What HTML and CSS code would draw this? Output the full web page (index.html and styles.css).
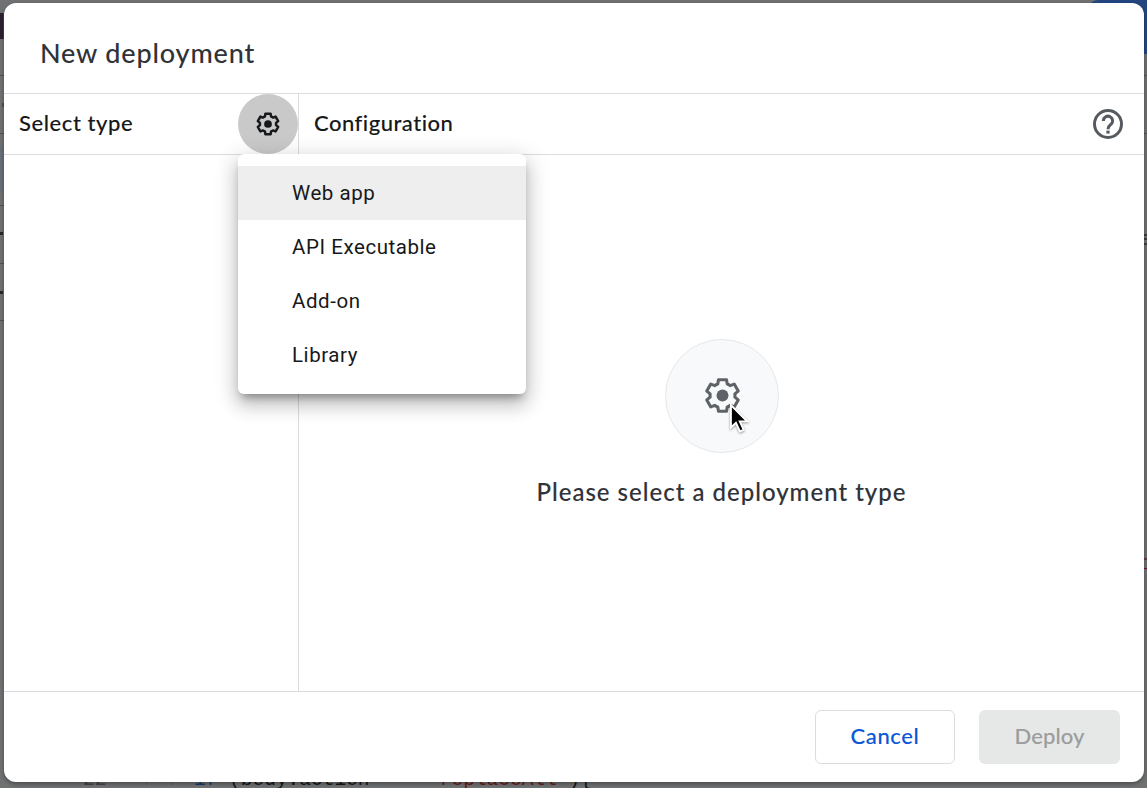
FILE: index.html
```html
<!DOCTYPE html>
<html lang="en">
<head>
<meta charset="utf-8">
<title>New deployment</title>
<link rel="stylesheet" href="styles.css">
</head>
<body>
<svg class="defs" aria-hidden="true">
  <symbol id="gear" viewBox="-18 -18 36 36">
    <path class="gear-rim" d="M-4.6-11.2-3.9-15.4H3.9L4.6-11.2Q6.2-10.7 7.4-9.6L11.4-11.1 15.3-4.3 12-1.6Q12.3 0 12 1.6L15.3 4.3 11.4 11.1 7.4 9.6Q6.2 10.7 4.6 11.2L3.9 15.4H-3.9L-4.6 11.2Q-6.2 10.7-7.4 9.6L-11.4 11.1-15.3 4.3-12 1.6Q-12.3 0-12-1.6L-15.3-4.3-11.4-11.1-7.4-9.6Q-6.2-10.7-4.6-11.2Z"/>
    <circle r="5.8" fill="currentColor"/>
  </symbol>
</svg>
<div class="editor" aria-hidden="true">
  <i class="mark purple"></i><i class="mark blue"></i><i class="mark tab"></i><i class="mark panel"></i><i class="mark l1"></i><i class="mark l2"></i><i class="mark l3"></i><i class="mark l4"></i><i class="mark l5"></i><i class="mark d1"></i><i class="mark d2"></i><i class="mark d3"></i><i class="mark r1"></i><i class="mark r2"></i><i class="mark r3"></i><i class="mark r4"></i><i class="mark r5"></i>
  <div class="code"><span class="num">22</span><span class="guide"></span><span class="kw">if</span> (body.action === <span class="str">'replaceAll'</span>){</div>
</div>
<main class="dialog">
  <header class="title"><h1>New deployment</h1></header>
  <section class="body">
    <aside class="types">
      <div class="bar"><h2 class="select">Select type</h2>
        <button class="gear-btn" aria-label="Types"><svg><use href="#gear"/></svg></button>
      </div>
      <ul class="menu">
        <li class="active">Web app</li><li>API Executable</li><li>Add-on</li><li>Library</li>
      </ul>
    </aside>
    <div class="config">
      <div class="bar"><h2 class="conf">Configuration</h2>
        <svg class="help" viewBox="0 0 30 30"><circle cx="15" cy="15" r="13.5"/><path d="M10.4 12A4.6 4.6 0 1 1 17.8 15.4C16 16.8 15 17.5 15 20.3"/><path class="dot" d="M13.4 21.6h3.2v3h-3.2z"/></svg>
      </div>
      <div class="empty">
        <div class="disc"><svg class="big"><use href="#gear"/></svg>
          <svg class="cursor" viewBox="0 0 22 32"><path d="M2 2V25.5L7.3 20.6 11.4 29.5 15.4 27.8 11.3 19H19Z"/></svg>
        </div>
        <p>Please select a deployment type</p>
      </div>
    </div>
  </section>
  <footer class="actions"><button class="cancel">Cancel</button><button class="deploy" disabled>Deploy</button></footer>
</main>
</body>
</html>
```
FILE: styles.css
```css
* { box-sizing: border-box; }
body { margin: 0; height: 788px; padding: 3px 3px 6px 4px; overflow: hidden; background: #707172; font-family: Lato, "Open Sans", sans-serif; font-variant-ligatures: none; }
h1, h2, p, ul { margin: 0; padding: 0; }
button { font: inherit; padding: 0; border: 0; }
.defs { position: absolute; width: 0; height: 0; }
.gear-rim { fill: none; stroke: currentColor; stroke-width: var(--rim, 3); stroke-linejoin: round; }

/* Dimmed editor behind the dialog */
.editor { position: absolute; inset: 0; overflow: hidden; }
.mark { position: absolute; left: 0; width: 4px; height: 1px; background: #505152; }
.purple { top: 13px; height: 26px; background: #2b2130; }
.blue { top: 13px; left: 3px; width: 1px; height: 26px; background: #294766; }
.tab { left: 1088px; top: 0; width: 59px; height: 54px; border-radius: 10px 0 0 0; background: #234680; }
.panel { top: 146px; height: 47px; background: #687077; }
.l1 { top: 75px; } .l2 { top: 133px; } .l3 { top: 205px; } .l4 { top: 263px; } .l5 { top: 320px; }
.d1 { top: 103px; left: 2px; height: 4px; }
.d2 { top: 232px; height: 3px; width: 3px; background: #252627; }
.d3 { top: 291px; height: 3px; width: 3px; background: #252627; }
.r1, .r2, .r3, .r4, .r5 { left: 1144px; }
.r1 { top: 75px; } .r2 { top: 133px; }
.r3 { top: 234px; height: 11px; background: repeating-linear-gradient(#3d3e42 0 2px, #707172 2px 4.5px); }
.r4 { top: 558px; height: 2px; background: #663b4b; } .r5 { top: 568px; background: #780c42; }
.code { position: absolute; left: 83px; top: 767px; white-space: pre; color: #151617; font: 19.5px/24px "Liberation Mono", monospace; }
.num { display: inline-block; width: 40px; color: #414447; }
.guide { display: inline-block; width: 71px; padding-left: 23px; }
.guide::before { content: ""; display: inline-block; width: 24px; height: 18px; border: solid #5c5d5e; border-width: 0 1px; }
.kw { color: #173967; }
.str { color: #681b19; }

.dialog { position: relative; height: 779px; display: flex; flex-direction: column; background: #fff; border-radius: 12px; box-shadow: 0 2px 4px #0005; }
.title { height: 91px; padding-left: 36px; border-bottom: 1px solid #dadce0; display: flex; align-items: center; }
h1 { font-size: 27px; font-weight: 500; line-height: 32px; color: #303338; letter-spacing: .84px; margin-top: 10px; }
.body { flex: 1; display: flex; min-height: 0; }
.types { width: 295px; border-right: 1px solid #dadce0; position: relative; }
.config { flex: 1; display: flex; flex-direction: column; }
.bar { height: 61px; border-bottom: 1px solid #dadce0; display: flex; align-items: center; justify-content: space-between; }
.types .bar { padding-left: 15px; }
.config .bar { padding: 0 21px 0 15px; }
h2 { font-size: 22px; line-height: 26px; font-weight: 500; color: #17181a; padding-bottom: 2px; -webkit-text-stroke: .1px; }
.select { letter-spacing: .58px; }
.conf { letter-spacing: .5px; }
.gear-btn { width: 60px; height: 60px; border-radius: 50%; background: #c9c9c9; color: #17181c; display: grid; place-items: center; --rim: 3.7; }
.gear-btn svg { width: 24px; height: 24px; }
.help { width: 30px; height: 30px; fill: none; stroke: #575a60; stroke-width: 3; }
.help .dot { fill: #575a60; stroke: none; }
.menu { position: absolute; z-index: 2; left: 234px; top: 60px; width: 288px; height: 240px; padding: 12px 0; list-style: none; background: #fff; border-radius: 6px; box-shadow: 0 7px 8px -4px #0005, 0 12px 18px 1px #0002, 0 5px 22px 4px #0002; }
.menu li { height: 54px; padding-left: 54px; font: 20.5px/54px Roboto, sans-serif; letter-spacing: .56px; color: #17181a; }
.menu .active { background: #eee; }
.empty { flex: 1; display: flex; flex-direction: column; align-items: center; padding-top: 184px; }
.disc { position: relative; width: 114px; height: 114px; border: 1px solid #e6e7e9; border-radius: 50%; background: #f8f9fa; display: grid; place-items: center; color: #5f6368; }
.big { width: 37px; height: 37px; margin: -1px 0 0 2px; }
.cursor { position: absolute; left: 63px; top: 63px; width: 21px; height: 31px; fill: #000; stroke: #fff; stroke-width: 2; filter: drop-shadow(0 1px 1px #0006); }
.empty p { margin-top: 24px; font-size: 24px; line-height: 30px; font-weight: 500; color: #303338; letter-spacing: 1px; -webkit-text-stroke: .1px; }
.actions { height: 91px; border-top: 1px solid #dadce0; display: flex; justify-content: flex-end; gap: 24px; padding: 18px 24px 0 0; }
.actions button { width: 141px; height: 54px; padding-bottom: 3px; border-radius: 6px; font-size: 22px; font-weight: 500; letter-spacing: .1px; -webkit-text-stroke: .1px; }
.actions .cancel { width: 140px; border: 1px solid #dadce0; background: #fff; color: #0b57d7; letter-spacing: .6px; }
.actions .deploy { background: #e6e8e7; color: #9b9d9d; }
```
